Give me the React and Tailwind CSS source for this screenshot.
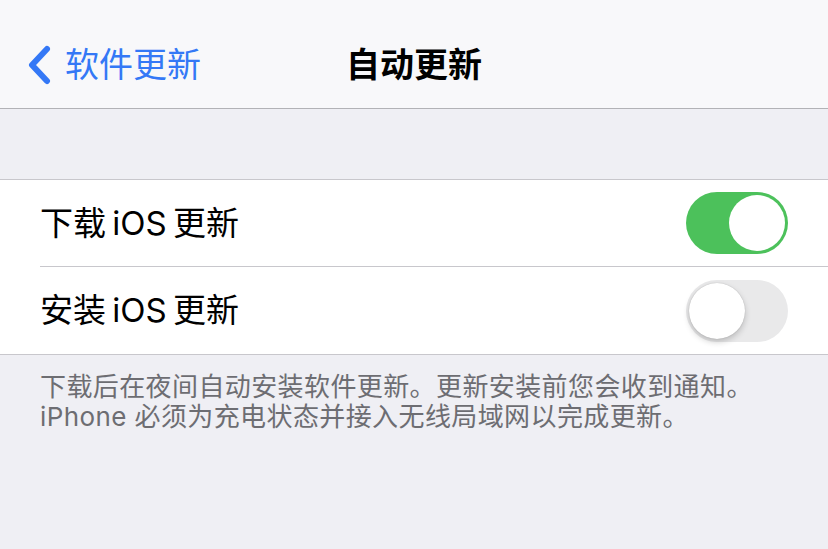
import React from "react";

const font = { fontFamily: 'Inter, "Noto Sans CJK SC", sans-serif' };

function Toggle({ on }) {
  if (on) {
    return (
      <div className="flex h-[62px] w-[102px] items-center justify-end rounded-full bg-[#4cc15b] p-[3px]">
        <div className="h-[56px] w-[56px] rounded-full bg-white" />
      </div>
    );
  }
  return (
    <div className="flex h-[62px] w-[102px] items-center justify-start rounded-full bg-[#e9e9ea] p-[3px]">
      <div className="h-[56px] w-[56px] rounded-full bg-white shadow-[0_3px_6px_rgba(0,0,0,0.2),0_0_1px_rgba(0,0,0,0.25)]" />
    </div>
  );
}

function Row({ label, on, last }) {
  return (
    <div className="flex h-[87px] items-stretch bg-white pl-[40px]">
      <div
        className={
          "flex flex-1 items-center justify-between pr-[40px] " +
          (last ? "" : "border-b border-[#c8c7cc]")
        }
      >
        <span className="text-[33px] leading-none text-black [word-spacing:-3px]">{label}</span>
        <Toggle on={on} />
      </div>
    </div>
  );
}

export default function App() {
  return (
    <div className="min-h-[549px] w-[828px] bg-[#efeff4]" style={font}>
      {/* nav bar */}
      <div className="grid h-[109px] grid-cols-[1fr_auto_1fr] items-center border-b border-[#b2b2b6] bg-[#f8f8fa] pt-[22px]">
        <div className="flex items-center pl-[26px] text-[#3478f6]">
          <svg width="26" height="40" viewBox="0 0 26 40" fill="none">
            <path
              d="M21 4 L6 20 L21 36"
              stroke="currentColor"
              strokeWidth="6"
              strokeLinecap="round"
              strokeLinejoin="round"
            />
          </svg>
          <span className="ml-[13px] text-[34px] leading-none">软件更新</span>
        </div>
        <div className="text-[34px] font-bold leading-none text-black">自动更新</div>
        <div />
      </div>

      {/* group spacer */}
      <div className="h-[71px] border-b border-[#c8c7cc]" />

      <div className="border-b border-[#c8c7cc]">
        <Row label="下载 iOS 更新" on />
        <Row label="安装 iOS 更新" on={false} last />
      </div>

      <div className="px-[40px] pt-[17px] text-[26px] leading-[30px] tracking-[0.4px] text-[#6d6d72]">
        <p>下载后在夜间自动安装软件更新。更新安装前您会收到通知。</p>
        <p>iPhone 必须为充电状态并接入无线局域网以完成更新。</p>
      </div>
    </div>
  );
}
